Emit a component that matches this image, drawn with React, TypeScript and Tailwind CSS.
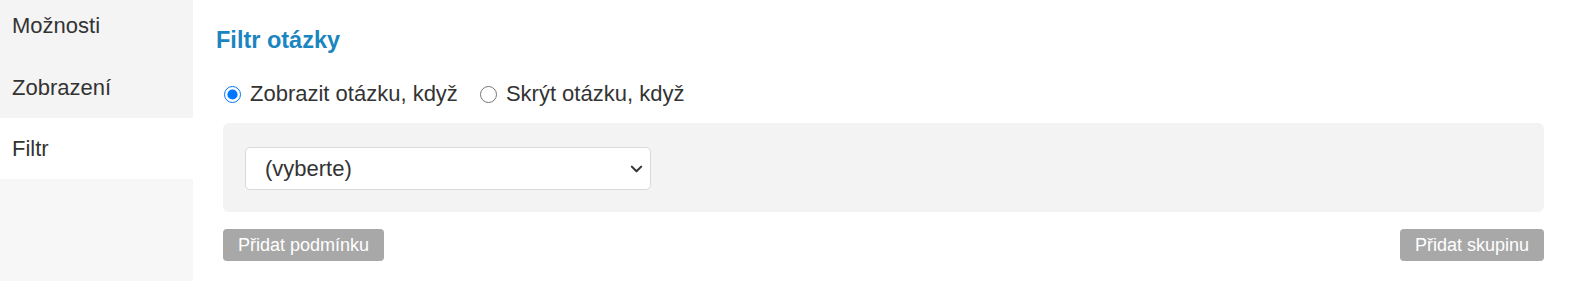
import { useState } from "react";

const tabs = ["Možnosti", "Zobrazení", "Filtr"];

export default function App() {
  const [mode, setMode] = useState("show");
  const active = "Filtr";

  return (
    <div className="flex h-[281px] w-[1570px] overflow-hidden bg-white font-['Liberation_Sans',Arial,sans-serif] text-[#333]">
      {/* Sidebar tabs */}
      <div className="flex w-[193px] shrink-0 flex-col bg-[#f7f7f7]">
        {tabs.map((t, i) => (
          <div
            key={t}
            className={`flex items-center px-3 text-[22px] ${i === 0 ? "h-[57px] pb-[6px]" : "h-[61px]"} ${
              t === active ? "bg-white" : "bg-[#f4f4f4]"
            }`}
          >
            {t}
          </div>
        ))}
      </div>

      {/* Filter panel */}
      <div className="flex flex-1 flex-col pl-[23px] pr-[26px]">
        <h2 className="mt-[26px] text-[23.5px] font-bold leading-[28px] text-[#1a85c0]">Filtr otázky</h2>

        <div className="ml-[7px] flex flex-col">
          <div className="mt-[26px] flex h-[28px] items-center text-[22px] leading-[28px]">
            <label className="ml-px flex items-center gap-[9px]">
              <input
                type="radio"
                checked={mode === "show"}
                onChange={() => setMode("show")}
                className="m-0 h-[17px] w-[17px] accent-[#0075ff]"
              />
              Zobrazit otázku, když
            </label>
            <label className="ml-[22px] flex items-center gap-[9px]">
              <input
                type="radio"
                checked={mode === "hide"}
                onChange={() => setMode("hide")}
                className="m-0 h-[17px] w-[17px] accent-[#0075ff]"
              />
              Skrýt otázku, když
            </label>
          </div>

          <div className="mt-[15px] rounded-md bg-[#f3f3f3] px-[22px] pb-[22px] pt-[24px]">
            <div className="flex h-[43px] w-[406px] items-center justify-between rounded-[5px] border border-[#dadada] bg-white pl-[19px] pr-[6px] text-[22px]">
              <span>(vyberte)</span>
              <svg width="15" height="15" viewBox="0 0 16 16" fill="none" stroke="#333" strokeWidth="2.2" strokeLinecap="round" strokeLinejoin="round">
                <path d="M3 6l5 5 5-5" />
              </svg>
            </div>
          </div>

          <div className="mt-[17px] flex justify-between">
            <button className="h-[32px] rounded bg-[#a8a8a8] px-[15px] text-[18px] text-white">Přidat podmínku</button>
            <button className="h-[32px] rounded bg-[#a8a8a8] px-[15px] text-[18px] text-white">Přidat skupinu</button>
          </div>
        </div>
      </div>
    </div>
  );
}
